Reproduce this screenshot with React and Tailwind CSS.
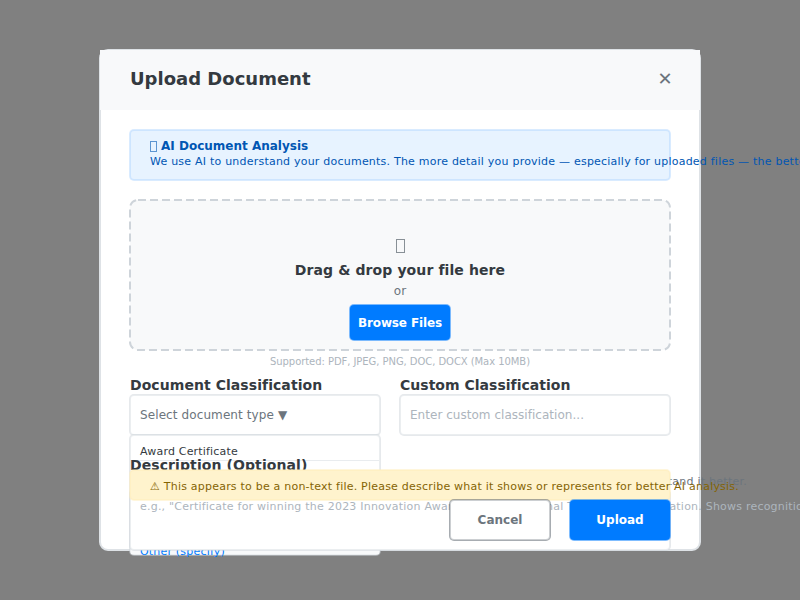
import React from "react";

const field =
  "rounded-[4px] border border-[#dee2e6]/60 bg-white shadow-[0_0_0_1px_rgba(206,212,218,0.5)]";

function Header() {
  return (
    <header className="-mx-px -mt-px flex h-[60px] shrink-0 items-center justify-between bg-[#f8f9fa] pr-[27.5px] pl-[30px]">
      <h1 className="pb-[3px] text-[18px] leading-[20px] font-bold text-[#343a40]">Upload Document</h1>
      <button className="pb-[3px] text-[18px] leading-[20px] text-[#6c757d]">✕</button>
    </header>
  );
}

function InfoBox() {
  return (
    <section className="h-[50px] rounded-[4px] border border-[#b3d7ff]/50 bg-[#e7f3ff] pt-[7px] pl-[19px] whitespace-nowrap text-[#0056b3] shadow-[0_0_0_1px_rgba(179,215,255,0.5)]">
      <h2 className="flex items-center gap-[4px] text-[12px] leading-[16px] font-bold">
        <span className="mt-px h-[11px] w-[7px] border border-[#0056b3]/60" />
        AI Document Analysis
      </h2>
      <p className="text-[11px] leading-[15px] tracking-[0.22px]">
        We use AI to understand your documents. The more detail you provide — especially for uploaded files — the better the results will be.
      </p>
    </section>
  );
}

function DropZone() {
  return (
    <section className="relative mt-[20px] flex h-[150px] flex-col items-center rounded-[8px] bg-[#f8f9fa] pt-[39px]">
      <svg className="absolute inset-0 h-full w-full overflow-visible" fill="none">
        <rect width="540" height="150" rx="8" stroke="#ced4da" strokeWidth="2" strokeDasharray="8 4" />
      </svg>
      <span className="mb-[7px] h-[14px] w-[9px] border border-[#6c757d]/80" />
      <p className="text-[14px] leading-[20px] font-bold tracking-[0.1px] text-[#343a40]">Drag &amp; drop your file here</p>
      <p className="text-[12px] leading-[22px] text-[#6c757d]">or</p>
      <button className="mt-[3px] h-[35px] w-[100px] rounded-[4px] bg-[#007bff] text-[12px] leading-[34px] font-bold tracking-[-0.12px] whitespace-nowrap text-white shadow-[0_0_0_1px_rgba(0,123,255,0.5)]">
        Browse Files
      </button>
    </section>
  );
}

function Dropdown() {
  return (
    <ul className="absolute top-[60px] left-0 flex h-[120px] w-[250px] flex-col justify-between rounded-[4px] border border-[#dee2e6]/60 bg-white text-[11px] tracking-[0.19px] shadow-[0_0_0_1px_rgba(206,212,218,0.5)]">
      <li className="h-[25px] border-b border-[#e9ecef] pl-[9px] leading-[32px] text-[#343a40]">Award Certificate</li>
      <li className="h-[20px] bg-[#f8f9fa] pl-[9px] leading-[36px] text-[#007bff]">Other (specify)</li>
    </ul>
  );
}

function Classification() {
  return (
    <section className="flex gap-[20px]">
      <div className="relative w-[250px]">
        <h3 className="h-[20px] text-[14px] leading-[20px] font-bold tracking-[0.06px] text-[#343a40]">Document Classification</h3>
        <div className={field + " h-[40px] pl-[9px] text-[12px] leading-[38px] tracking-[0.1px] text-[#6c757d]"}>
          Select document type ▼
        </div>
        <Dropdown />
      </div>
      <div className="w-[270px]">
        <h3 className="h-[20px] text-[14px] leading-[20px] font-bold tracking-[0.02px] text-[#343a40]">Custom Classification</h3>
        <div className={field + " h-[40px] pl-[9px] text-[12px] leading-[38px] tracking-[0.03px] text-[#adb5bd]"}>
          Enter custom classification...
        </div>
      </div>
    </section>
  );
}

function Description() {
  return (
    <section className="relative mt-[20px] whitespace-nowrap">
      <h3 className="h-[18px] text-[14px] leading-[20px] font-bold tracking-[0.09px] text-[#343a40]">Description (Optional)</h3>
      <p className="-mr-[77px] flex h-[17px] justify-end text-[11px] leading-[17px] tracking-[0.25px] text-[#6c757d]">
        This helps our AI understand it better.
      </p>
      <div className={field + " h-[60px] pt-[8px] pl-[9px] text-[11px] leading-[15px] tracking-[0.217px] text-[#adb5bd]"}>
        e.g., "Certificate for winning the 2023 Innovation Award from the National Technology Foundation. Shows recognition for outstanding work."
      </div>
      <div className="absolute top-[15px] left-0 h-[30px] w-full rounded-[4px] border border-[#ffeeba]/50 bg-[#fff3cd] pl-[19px] text-[11px] leading-[31px] tracking-[0.215px] text-[#856404] shadow-[0_0_0_1px_rgba(255,238,186,0.5)]">
        ⚠ This appears to be a non-text file. Please describe what it shows or represents for better AI analysis.
      </div>
      <div className="absolute top-[45px] right-0 flex gap-[20px] text-[12px] font-bold">
        <button className="h-[40px] w-[100px] rounded-[4px] border border-[#6c757d]/35 bg-white leading-[38px] text-[#6c757d] shadow-[0_0_0_1px_rgba(108,117,125,0.6)]">
          Cancel
        </button>
        <button className="h-[40px] w-[100px] rounded-[4px] bg-[#007bff] leading-[40px] text-white shadow-[0_0_0_1px_rgba(0,123,255,0.5)]">
          Upload
        </button>
      </div>
    </section>
  );
}

export default function App() {
  return (
    <div className="flex h-[600px] w-[800px] items-center justify-center overflow-hidden bg-[#808080] [font-family:'DejaVu_Sans',sans-serif]">
      <main className="flex h-[502px] w-[602px] flex-col rounded-[9px] border-2 border-[#dee2e6] bg-white">
        <Header />
        <div className="px-[29px] pt-[20px]">
          <InfoBox />
          <DropZone />
          <p className="h-[25px] text-center text-[10px] leading-[23px] tracking-[-0.06px] text-[#adb5bd]">
            Supported: PDF, JPEG, PNG, DOC, DOCX (Max 10MB)
          </p>
          <Classification />
          <Description />
        </div>
      </main>
    </div>
  );
}
